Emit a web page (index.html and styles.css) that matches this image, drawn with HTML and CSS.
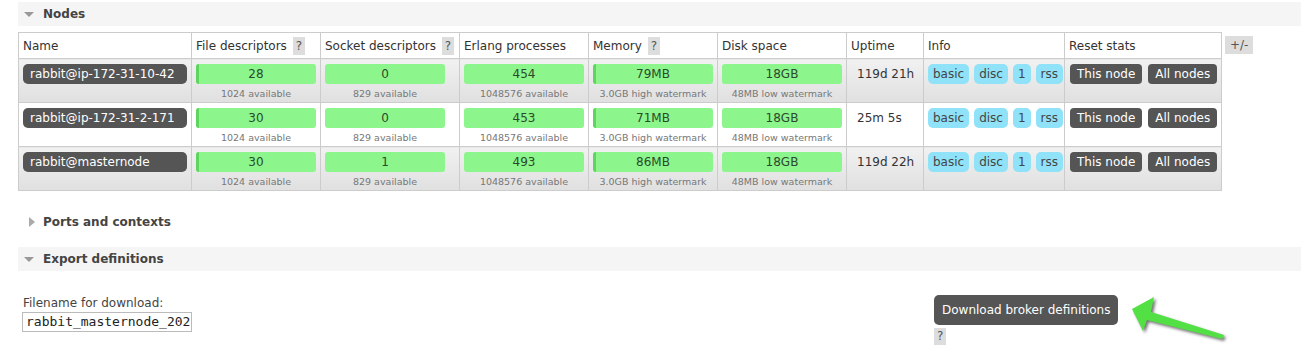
FILE: index.html
```html
<!DOCTYPE html>
<html>
<head>
<meta charset="utf-8">
<link rel="stylesheet" href="styles.css">
</head>
<body>
<div class="page">
  <div class="section-head open"><span class="tri down"></span>Nodes</div>
  <div class="table-row">
    <table class="nodes">
      <colgroup>
        <col style="width:173px"><col style="width:129px"><col style="width:139px"><col style="width:129px"><col style="width:129px"><col style="width:129px"><col style="width:77px"><col style="width:141px"><col style="width:157px">
      </colgroup>
      <thead>
        <tr>
          <th>Name</th>
          <th>File descriptors <span class="help">?</span></th>
          <th>Socket descriptors <span class="help">?</span></th>
          <th>Erlang processes</th>
          <th>Memory <span class="help">?</span></th>
          <th>Disk space</th>
          <th>Uptime</th>
          <th>Info</th>
          <th>Reset stats</th>
        </tr>
      </thead>
      <tbody>
        <tr class="alt">
          <td><span class="pill">rabbit@ip-172-31-10-42</span></td>
          <td><div class="bar"><span class="fill" style="width:3px"></span>28</div><div class="sub">1024 available</div></td>
          <td><div class="bar">0</div><div class="sub">829 available</div></td>
          <td><div class="bar">454</div><div class="sub">1048576 available</div></td>
          <td><div class="bar"><span class="fill" style="width:3px"></span>79MB</div><div class="sub">3.0GB high watermark</div></td>
          <td><div class="bar">18GB</div><div class="sub">48MB low watermark</div></td>
          <td class="uptime">119d 21h</td>
          <td><div class="badges"><span class="badge">basic</span><span class="badge">disc</span><span class="badge">1</span><span class="badge">rss</span></div></td>
          <td><div class="btns"><span class="btn">This node</span><span class="btn">All nodes</span></div></td>
        </tr>
        <tr>
          <td><span class="pill">rabbit@ip-172-31-2-171</span></td>
          <td><div class="bar"><span class="fill" style="width:3px"></span>30</div><div class="sub">1024 available</div></td>
          <td><div class="bar">0</div><div class="sub">829 available</div></td>
          <td><div class="bar">453</div><div class="sub">1048576 available</div></td>
          <td><div class="bar"><span class="fill" style="width:3px"></span>71MB</div><div class="sub">3.0GB high watermark</div></td>
          <td><div class="bar">18GB</div><div class="sub">48MB low watermark</div></td>
          <td class="uptime">25m 5s</td>
          <td><div class="badges"><span class="badge">basic</span><span class="badge">disc</span><span class="badge">1</span><span class="badge">rss</span></div></td>
          <td><div class="btns"><span class="btn">This node</span><span class="btn">All nodes</span></div></td>
        </tr>
        <tr class="alt">
          <td><span class="pill">rabbit@masternode</span></td>
          <td><div class="bar"><span class="fill" style="width:3px"></span>30</div><div class="sub">1024 available</div></td>
          <td><div class="bar">1</div><div class="sub">829 available</div></td>
          <td><div class="bar">493</div><div class="sub">1048576 available</div></td>
          <td><div class="bar"><span class="fill" style="width:3px"></span>86MB</div><div class="sub">3.0GB high watermark</div></td>
          <td><div class="bar">18GB</div><div class="sub">48MB low watermark</div></td>
          <td class="uptime">119d 22h</td>
          <td><div class="badges"><span class="badge">basic</span><span class="badge">disc</span><span class="badge">1</span><span class="badge">rss</span></div></td>
          <td><div class="btns"><span class="btn">This node</span><span class="btn">All nodes</span></div></td>
        </tr>
      </tbody>
    </table>
    <span class="plusminus">+/-</span>
  </div>

  <div class="section-head closed"><span class="tri right"></span>Ports and contexts</div>
  <div class="section-head open export"><span class="tri down"></span>Export definitions</div>

  <div class="export-form">
    <div class="left">
      <label class="lbl">Filename for download:</label>
      <div class="input">rabbit_masternode_202</div>
    </div>
    <div class="right">
      <span class="dl-btn">Download broker definitions</span>
      <span class="help q">?</span>
    </div>
  </div>

  <svg class="arrow" width="110" height="60" viewBox="0 0 110 60">
    <polygon points="7,19 29,7 26,22 99,45 97,49 22,30 18,41" fill="#52e044"/>
  </svg>
</div>
</body>
</html>
```

FILE: styles.css
```css
html, body {
  margin: 0;
  padding: 0;
  background: #fff;
}
body {
  font-family: "DejaVu Sans", Verdana, sans-serif;
  font-size: 12px;
  color: #444;
}
.page {
  position: relative;
  padding: 2px 0 0 18px;
  width: 1283px;
  height: 362px;
}
.section-head {
  height: 24px;
  line-height: 24px;
  font-weight: bold;
  color: #444;
  padding-left: 25px;
  position: relative;
}
.section-head.open {
  background: #f5f5f5;
}
.tri {
  position: absolute;
  width: 0;
  height: 0;
}
.tri.down {
  left: 6px;
  top: 10px;
  border-left: 5px solid transparent;
  border-right: 5px solid transparent;
  border-top: 5px solid #999;
}
.tri.right {
  left: 11px;
  top: 7px;
  border-top: 5px solid transparent;
  border-bottom: 5px solid transparent;
  border-left: 6px solid #aaa;
}
.table-row {
  display: flex;
  align-items: flex-start;
  gap: 3px;
  margin-top: 6px;
}
.nodes {
  border-collapse: collapse;
  table-layout: fixed;
  width: 1203px;
  border: 1px solid #ccc;
}
.nodes th {
  font-weight: normal;
  text-align: left;
  color: #333;
  height: 25px;
  padding: 0 4px;
  border: 1px solid #ccc;
  background: #fff;
  white-space: nowrap;
}
.nodes td {
  border: 1px solid #ccc;
  height: 44px;
  padding: 5px 4px 0;
  vertical-align: top;
  box-sizing: border-box;
}
.nodes tr.alt td {
  background: linear-gradient(#f1f1f1, #e0e0e0);
}
.help {
  display: inline-block;
  background: #ddd;
  color: #555;
  padding: 0 3px;
  line-height: 18px;
  margin-left: 2px;
}
.pill {
  display: block;
  background: #555;
  color: #fff;
  border-radius: 5px;
  height: 20px;
  line-height: 20px;
  padding-left: 7px;
  white-space: nowrap;
}
.bar {
  position: relative;
  width: 120px;
  height: 20px;
  line-height: 20px;
  text-align: center;
  background: #8cf58c;
  border-radius: 3px;
  color: #2b4a2b;
  overflow: hidden;
}
.fill {
  position: absolute;
  left: 0;
  top: 0;
  bottom: 0;
  background: #5fd55f;
}
.sub {
  width: 120px;
  text-align: center;
  font-size: 9.5px;
  line-height: 14px;
  margin-top: 3px;
  color: #777;
  white-space: nowrap;
}
.uptime {
  padding-left: 10px !important;
  line-height: 20px;
  color: #333;
}
.badges, .btns {
  display: flex;
}
.badges {
  gap: 5px;
}
.badge {
  background: #8fe2f7;
  color: #444;
  border-radius: 5px;
  height: 20px;
  line-height: 20px;
  padding: 0 5px;
}
.btns {
  gap: 6px;
  padding-left: 1px;
}
.btn {
  background: #555;
  color: #fff;
  border-radius: 4px;
  height: 20px;
  line-height: 20px;
  padding: 0 7px;
  white-space: nowrap;
}
.plusminus {
  margin-top: 4px;
  background: #ddd;
  color: #555;
  line-height: 18px;
  padding: 0 5px;
}
.section-head.closed {
  margin-top: 19px;
}
.section-head.export {
  margin-top: 13px;
}
.export-form {
  display: flex;
  margin-top: 24px;
}
.left {
  width: 916px;
  padding-top: 1px;
}
.lbl {
  display: block;
  padding-left: 5px;
  line-height: 14px;
  color: #444;
}
.input {
  margin-top: 2px;
  margin-left: 4px;
  width: 165px;
  height: 18px;
  border: 1px solid #bbb;
  font-family: "DejaVu Sans Mono", monospace;
  font-size: 13px;
  line-height: 18px;
  padding-left: 3px;
  color: #222;
  overflow: hidden;
  white-space: nowrap;
}
.right {
  display: flex;
  flex-direction: column;
  align-items: flex-start;
}
.dl-btn {
  background: #555;
  color: #fff;
  border-radius: 5px;
  height: 30px;
  line-height: 30px;
  padding: 0 8px;
  white-space: nowrap;
}
.help.q {
  margin: 3px 0 0 0;
  padding: 0 3px;
  line-height: 17px;
}
.arrow {
  position: absolute;
  left: 1125px;
  top: 290px;
  filter: drop-shadow(2px 2px 1.5px rgba(0,0,0,0.55));
}
```
